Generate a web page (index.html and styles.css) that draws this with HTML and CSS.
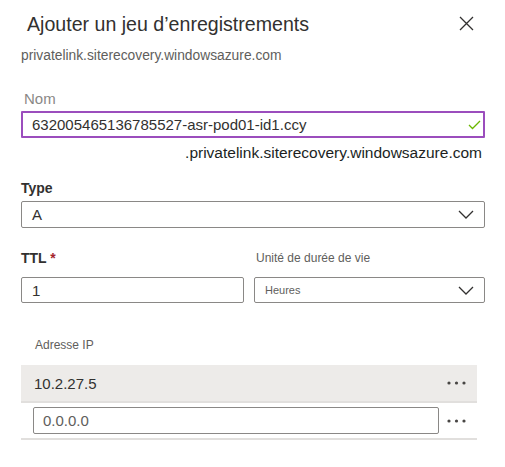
FILE: index.html
```html
<!DOCTYPE html>
<html lang="fr">
<head>
<meta charset="utf-8">
<link rel="stylesheet" href="styles.css">
</head>
<body>
<div class="panel">
  <div class="header">
    <h1 class="title">Ajouter un jeu d’enregistrements</h1>
    <svg class="close" width="15" height="15" viewBox="0 0 15 15"><path d="M1 1 L14 14 M14 1 L1 14" stroke="#323130" stroke-width="1.3" fill="none"/></svg>
  </div>
  <div class="subtitle">privatelink.siterecovery.windowsazure.com</div>

  <div class="field-nom">
    <div class="label-light">Nom</div>
    <div class="input input-active">
      <span class="value">632005465136785527-asr-pod01-id1.ccy</span>
      <svg width="13" height="10" viewBox="0 0 13 10"><path d="M1 5 L4.5 8.5 L12 1" stroke="#6bb700" stroke-width="1.3" fill="none"/></svg>
    </div>
    <div class="suffix">.privatelink.siterecovery.windowsazure.com</div>
  </div>

  <div class="field-type">
    <div class="label-bold">Type</div>
    <div class="input select">
      <span class="value">A</span>
      <svg class="chev" width="16" height="9" viewBox="0 0 16 9"><path d="M1 1 L8 8 L15 1" stroke="#323130" stroke-width="1.3" fill="none"/></svg>
    </div>
  </div>

  <div class="ttl-row">
    <div class="ttl-col">
      <div class="label-bold">TTL <span class="req">*</span></div>
      <div class="input"><span class="value">1</span></div>
    </div>
    <div class="unit-col">
      <div class="label-small">Unité de durée de vie</div>
      <div class="input select">
        <span class="value-small">Heures</span>
        <svg class="chev" width="16" height="9" viewBox="0 0 16 9"><path d="M1 1 L8 8 L15 1" stroke="#323130" stroke-width="1.3" fill="none"/></svg>
      </div>
    </div>
  </div>

  <div class="ip-block">
    <div class="ip-head">Adresse IP</div>
    <div class="ip-row ip-row-selected">
      <span class="ip-value">10.2.27.5</span>
      <svg class="dots" width="19" height="4" viewBox="0 0 19 4"><circle cx="2" cy="2" r="1.6" fill="#484644"/><circle cx="9.5" cy="2" r="1.6" fill="#484644"/><circle cx="17" cy="2" r="1.6" fill="#484644"/></svg>
    </div>
    <div class="ip-row ip-row-edit">
      <div class="ip-input"><span>0.0.0.0</span></div>
      <svg class="dots" width="19" height="4" viewBox="0 0 19 4"><circle cx="2" cy="2" r="1.6" fill="#484644"/><circle cx="9.5" cy="2" r="1.6" fill="#484644"/><circle cx="17" cy="2" r="1.6" fill="#484644"/></svg>
    </div>
  </div>
</div>
</body>
</html>
```

FILE: styles.css
```css
html, body {
  margin: 0;
  padding: 0;
  background: #ffffff;
}
body {
  font-family: "Liberation Sans", Arial, sans-serif;
  color: #323130;
}
.panel {
  padding: 0 20px 0 21px;
  width: 464px;
}
.header {
  display: flex;
  align-items: center;
  justify-content: space-between;
  height: 48px;
  padding-left: 6px;
  padding-right: 11px;
}
.title {
  margin: 0;
  font-size: 19.6px;
  font-weight: normal;
  color: #323130;
}
.close {
  display: block;
  margin-top: -2px;
}
.subtitle {
  font-size: 13.8px;
  color: #605e5c;
  line-height: 16px;
}
.field-nom {
  margin-top: 26px;
}
.label-light {
  font-size: 15px;
  color: #8a8886;
  padding-left: 3px;
  line-height: 18px;
  font-weight: 300;
}
.input {
  box-sizing: border-box;
  height: 26px;
  border: 1px solid #8a8886;
  border-radius: 2px;
  display: flex;
  align-items: center;
  justify-content: space-between;
  padding: 0 10px 0 10px;
}
.input-active {
  height: 27px;
  border: 2px solid #9b4dbd;
  border-radius: 1px;
  margin-top: 3px;
  padding-left: 9px;
  padding-right: 2px;
}
.value {
  font-size: 15px;
  color: #323130;
}
.value-small {
  font-size: 11px;
  color: #605e5c;
}
.suffix {
  text-align: right;
  font-size: 15.5px;
  color: #201f1e;
  padding-right: 3px;
  margin-top: 6px;
  line-height: 18px;
}
.field-type {
  margin-top: 17px;
}
.label-bold {
  font-size: 14px;
  font-weight: 600;
  color: #323130;
  line-height: 18px;
  margin-bottom: 4px;
}
.select {
  height: 27px;
}
.chev {
  display: block;
}
.req {
  color: #a4262c;
}
.ttl-row {
  display: flex;
  gap: 10px;
  margin-top: 21px;
}
.ttl-col {
  width: 223px;
}
.ttl-col .label-bold {
  margin-bottom: 10px;
}
.ttl-col .input {
  height: 26px;
}
.unit-col {
  flex: 1;
}
.label-small {
  font-size: 12px;
  color: #605e5c;
  line-height: 18px;
  margin-bottom: 10px;
  padding-left: 2px;
}
.unit-col .input {
  height: 26px;
}
.ip-block {
  width: 456px;
  margin-top: 35px;
}
.ip-head {
  font-size: 12px;
  color: #605e5c;
  padding-left: 14px;
  line-height: 14px;
  margin-bottom: 13px;
}
.ip-row {
  display: flex;
  align-items: center;
  justify-content: space-between;
  border-bottom: 2px solid #e1dfdd;
  padding-right: 11px;
}
.ip-row-selected {
  background: #edebe9;
  height: 36px;
  padding-left: 13px;
}
.ip-value {
  font-size: 15px;
  color: #323130;
}
.dots {
  display: block;
}
.ip-row-edit {
  height: 35px;
  padding-left: 12px;
}
.ip-input {
  box-sizing: border-box;
  width: 406px;
  height: 27px;
  border: 1px solid #8a8886;
  border-radius: 2px;
  display: flex;
  align-items: center;
  padding-left: 9px;
  font-size: 15px;
  color: #605e5c;
}
```
